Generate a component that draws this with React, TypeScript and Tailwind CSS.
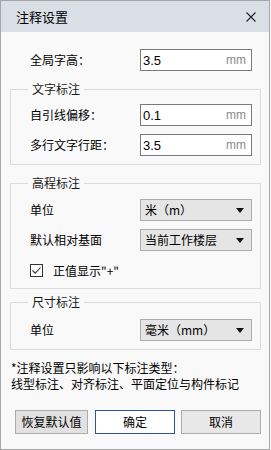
import React from "react";

const font = { fontFamily: '"Noto Sans CJK SC", "Liberation Sans", sans-serif' };

function NumInput({ value }: { value: string }) {
  return (
    <div className="w-[112px] h-[22px] bg-white border border-[#7a7a7a] flex items-center justify-between pl-[2px] pr-[5px]">
      <span className="text-[13px] text-black leading-none" style={{ fontFamily: '"Liberation Sans", sans-serif' }}>{value}</span>
      <span className="text-[12px] text-[#8a8a8a] leading-none" style={{ fontFamily: '"Liberation Sans", sans-serif' }}>mm</span>
    </div>
  );
}

function Select({ value }: { value: string }) {
  return (
    <div className="w-[112px] h-[22px] bg-[#e5e5e5] border border-[#adadad] flex items-center justify-between pl-[4px] pr-[7px]">
      <span className="text-[12px] text-black leading-none">{value}</span>
      <svg width="8" height="5" viewBox="0 0 8 5">
        <path d="M0 0 H8 L4 5 Z" fill="#111" />
      </svg>
    </div>
  );
}

function Group({ title, children, className }: { title: string; children: React.ReactNode; className?: string }) {
  return (
    <fieldset className={`border border-[#dcdcdc] ${className ?? ""}`}>
      <legend className="ml-[17px] px-[4px] text-[12px] leading-[16px] text-[#1a1a1a]">{title}</legend>
      <div className="pl-[19px] pr-[8px]">{children}</div>
    </fieldset>
  );
}

function Row({ label, children }: { label: string; children: React.ReactNode }) {
  return (
    <div className="flex items-center">
      <span className="w-[110px] text-[12px] text-black leading-none">{label}</span>
      {children}
    </div>
  );
}

export default function App() {
  return (
    <div className="w-[271px] h-[450px] bg-[#f9f9f9]" style={font}>
      <div className="w-[270px] h-[450px] border border-[#a6a6a6] flex flex-col">
        <div className="h-[31px] bg-[#dadee5] flex items-center justify-between pl-[15px] pr-[13px]">
          <span className="text-[13px] text-black">注释设置</span>
          <svg width="10" height="10" viewBox="0 0 10 10">
            <path d="M0.5 0.5 L9.5 9.5 M9.5 0.5 L0.5 9.5" stroke="#222" strokeWidth="1.1" />
          </svg>
        </div>
        <div className="flex flex-col pl-[9px] pr-[8px] bg-[#f9f9f9] flex-1">
          <div className="pl-[20px] mt-[17px]">
            <Row label="全局字高：">
              <NumInput value="3.5" />
            </Row>
          </div>

          <Group title="文字标注" className="mt-[10px] pt-[7px] pb-[8px]">
            <div className="flex flex-col gap-[8px]">
              <Row label="自引线偏移：">
                <NumInput value="0.1" />
              </Row>
              <Row label="多行文字行距：">
                <NumInput value="3.5" />
              </Row>
            </div>
          </Group>

          <Group title="高程标注" className="mt-[10px] pt-[8px] pb-[11px]">
            <div className="flex flex-col gap-[8px]">
              <Row label="单位">
                <Select value="米（m）" />
              </Row>
              <Row label="默认相对基面">
                <Select value="当前工作楼层" />
              </Row>
              <div className="flex items-center mt-[5px]">
                <svg width="13" height="13" viewBox="0 0 13 13">
                  <rect x="0.5" y="0.5" width="12" height="12" fill="#fff" stroke="#333" />
                  <path d="M2.5 6.5 L5.2 9.2 L10.5 3.5" fill="none" stroke="#333" strokeWidth="1.1" />
                </svg>
                <span className="ml-[10px] text-[12px] text-black leading-none">正值显示"+"</span>
              </div>
            </div>
          </Group>

          <Group title="尺寸标注" className="mt-[5px] pt-[9px] pb-[8px]">
            <Row label="单位">
              <Select value="毫米（mm）" />
            </Row>
          </Group>

          <div className="mt-[10px] ml-[1px] text-[12px] leading-[16px] text-black">
            <div>*注释设置只影响以下标注类型：</div>
            <div>线型标注、对齐标注、平面定位与构件标记</div>
          </div>

          <div className="flex items-center mt-[18px] ml-[5px]">
            <button className="w-[73px] h-[24px] bg-[#e1e1e1] border border-[#adadad] text-[12px] text-black">恢复默认值</button>
            <button className="ml-[7px] w-[80px] h-[24px] bg-white border border-[#2b5797] text-[12px] text-black">确定</button>
            <button className="ml-[6px] w-[80px] h-[24px] bg-[#e8e8e8] border border-[#adadad] text-[12px] text-black">取消</button>
          </div>
        </div>
      </div>
    </div>
  );
}
